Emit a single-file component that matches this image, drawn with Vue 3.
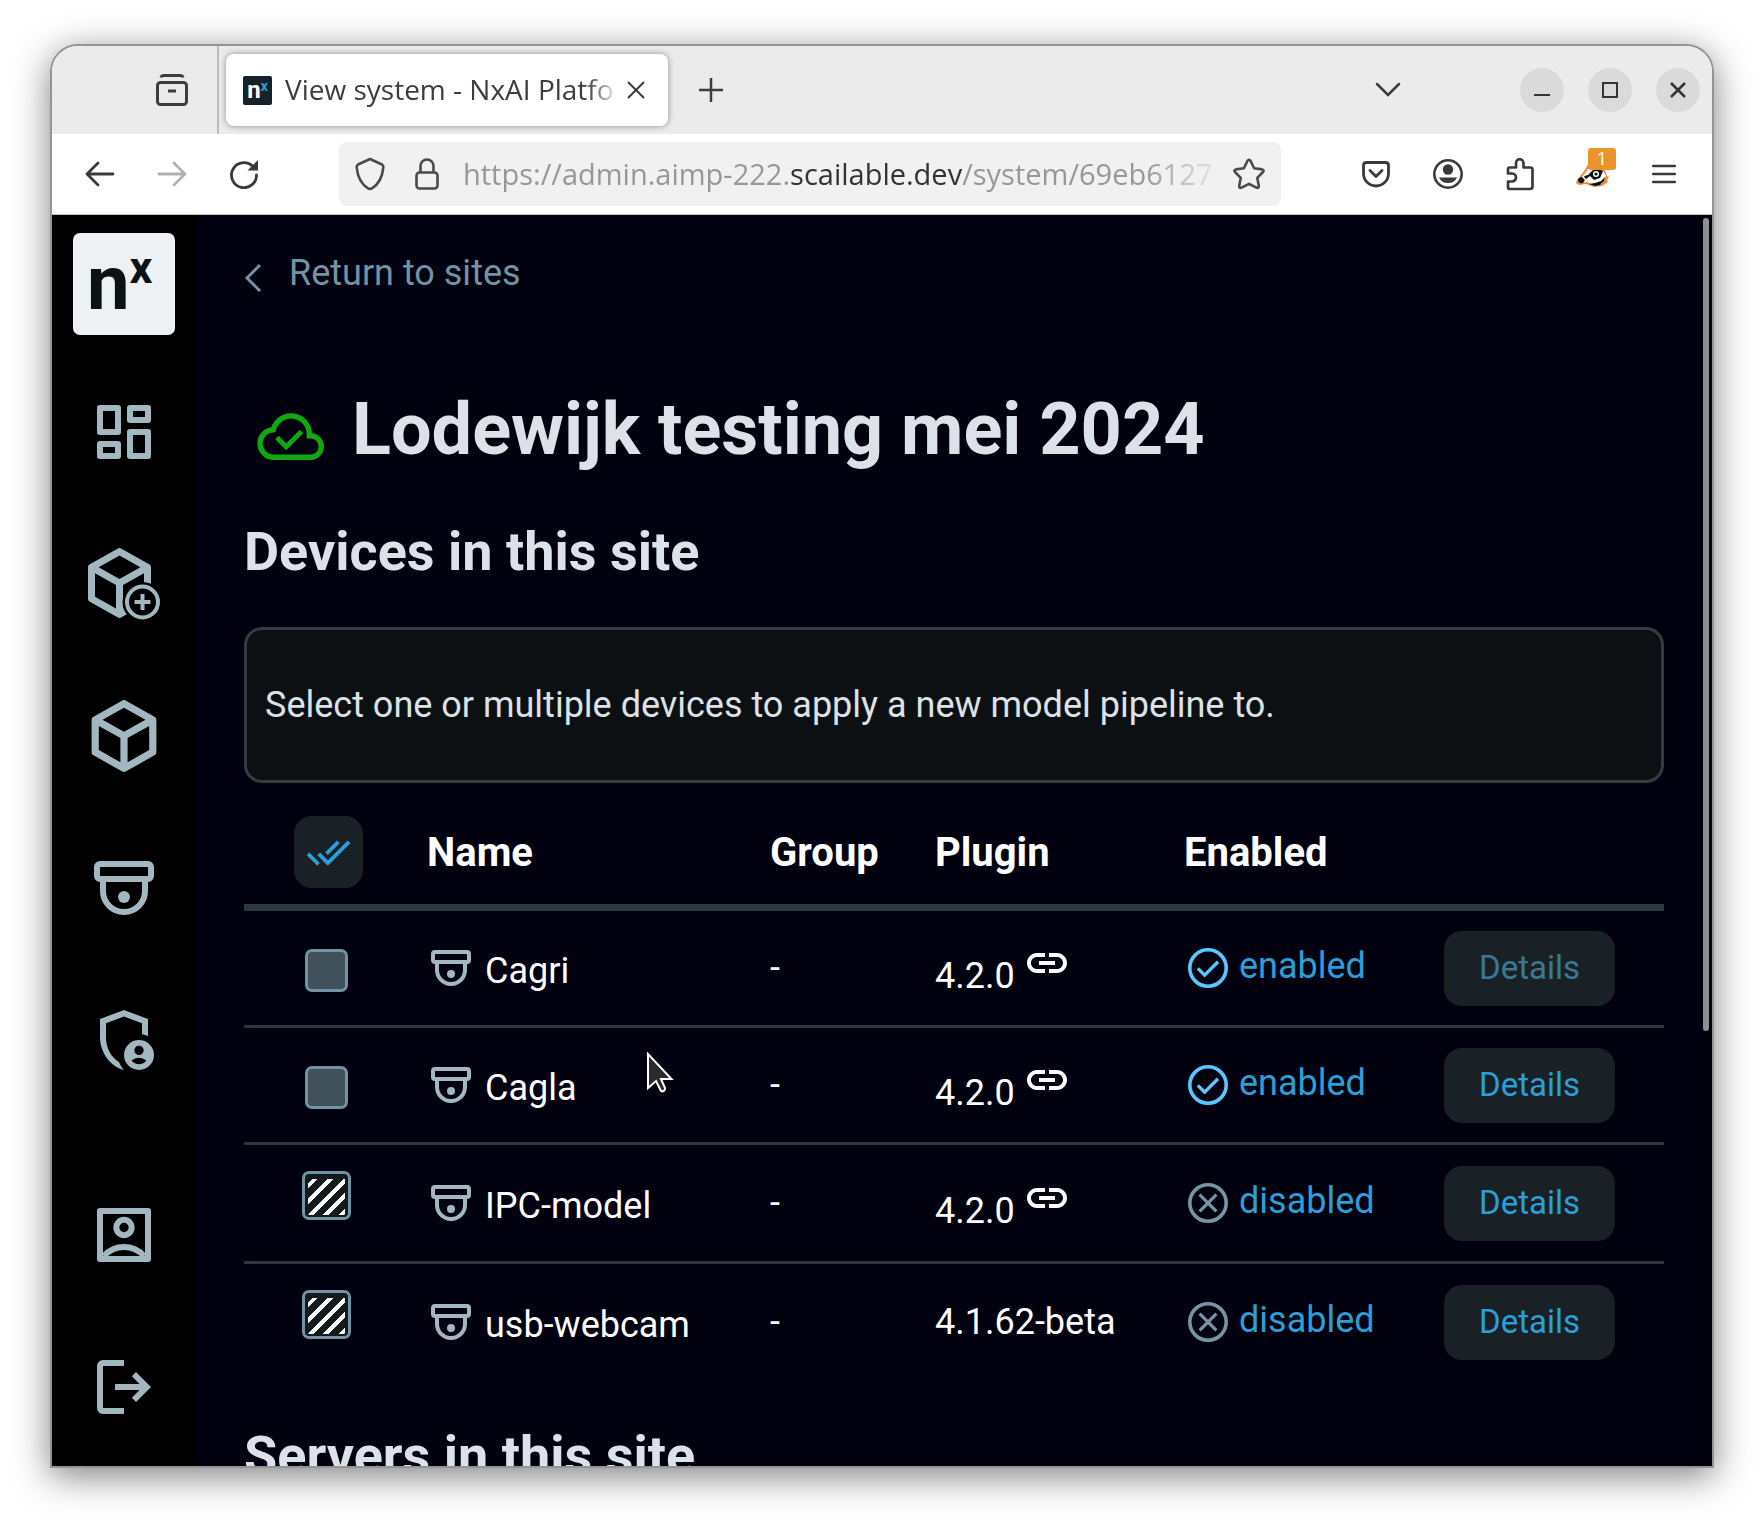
<script setup>
import { ref } from 'vue'

const devices = ref([
  { name: 'Cagri', group: '-', plugin: '4.2.0', linked: true, enabled: true, busy: true },
  { name: 'Cagla', group: '-', plugin: '4.2.0', linked: true, enabled: true, busy: false },
  { name: 'IPC-model', group: '-', plugin: '4.2.0', linked: true, enabled: false, busy: false },
  { name: 'usb-webcam', group: '-', plugin: '4.1.62-beta', linked: false, enabled: false, busy: false },
])
</script>

<template>
  <div class="desktop">
    <div class="window">
      <header class="tabbar">
        <button class="icon-btn recent" aria-label="Recent browsing">
          <svg width="32" height="32" viewBox="0 0 32 32" fill="none" stroke="#3d3d3d" stroke-width="3">
            <path d="M5 3.500Q5.500 1.500 8 1.500H24Q26.500 1.500 27 3.500" />
            <rect x="1.500" y="8.500" width="29" height="22" rx="3" />
            <path d="M12 17h8" />
          </svg>
        </button>
        <div class="tab">
          <span class="favicon"><b>n</b><i>x</i></span>
          <span class="tab-title">View system - NxAI Platfo</span>
          <button class="icon-btn" aria-label="Close tab">
            <svg width="18" height="18" viewBox="0 0 18 18" stroke="#3d3d3d" stroke-width="2"><path d="M1 1l16 16M17 1L1 17" /></svg>
          </button>
        </div>
        <button class="icon-btn new-tab" aria-label="New tab">
          <svg width="24" height="24" viewBox="0 0 24 24" stroke="#3d3d3d" stroke-width="2.500"><path d="M12 0v24M0 12h24" /></svg>
        </button>
        <button class="icon-btn list-tabs" aria-label="List all tabs">
          <svg width="26" height="16" viewBox="0 0 26 16" fill="none" stroke="#3d3d3d" stroke-width="2.500" stroke-linecap="round"><path d="M2 2l11 11L24 2" /></svg>
        </button>
        <div class="controls">
          <button aria-label="Minimize"><svg width="16" height="16" viewBox="0 0 16 16" stroke="#333" stroke-width="2"><path d="M0 13h16" /></svg></button>
          <button aria-label="Maximize"><svg width="16" height="16" viewBox="0 0 16 16" fill="none" stroke="#333" stroke-width="2"><path d="M1 1h14v14H1z" /></svg></button>
          <button aria-label="Close window"><svg width="16" height="16" viewBox="0 0 16 16" stroke="#333" stroke-width="2.500"><path d="M1 1l14 14M15 1L1 15" /></svg></button>
        </div>
      </header>

      <div class="toolbar">
        <div class="nav-buttons">
          <button class="icon-btn" aria-label="Back">
            <svg width="30" height="26" viewBox="0 0 30 26" fill="none" stroke="#3a3a3a" stroke-width="2.800" stroke-linecap="round" stroke-linejoin="round"><path d="M28 13H2M13 2L2 13l11 11" /></svg>
          </button>
          <button class="icon-btn" aria-label="Forward" disabled>
            <svg width="30" height="26" viewBox="0 0 30 26" fill="none" stroke="#b0b0b0" stroke-width="2.800" stroke-linecap="round" stroke-linejoin="round"><path d="M2 13h26M17 2l11 11-11 11" /></svg>
          </button>
          <button class="icon-btn" aria-label="Reload">
            <svg width="30" height="30" viewBox="0 0 30 30"><path d="M23.500 7A12.500 12.500 0 1 0 27.500 16" fill="none" stroke="#3a3a3a" stroke-width="2.800" stroke-linecap="round" /><path d="M29 1v10.500H18.500z" fill="#3a3a3a" /></svg>
          </button>
        </div>
        <div class="urlbar">
          <svg width="30" height="34" viewBox="0 0 30 34" fill="none" stroke="#4a4a4a" stroke-width="2.600" stroke-linejoin="round"><path d="M15 2l12 5.500q1.500 1 1.300 3C27.500 19 24 27 17 31.300q-2 1.200-4 0C6 27 2.500 19 1.700 10.500q-.2-2 1.300-3z" /></svg>
          <svg width="24" height="34" viewBox="0 0 24 34" fill="none" stroke="#4a4a4a" stroke-width="2.600"><rect x="1.500" y="15.500" width="21" height="16" rx="3" /><path d="M5.500 15V9a6.500 6.500 0 0 1 13 0v6" /></svg>
          <div class="url">https://admin.aimp-222.<b>scailable.dev</b>/system/69eb6127</div>
          <svg width="32" height="32" viewBox="0 0 32 32" fill="none" stroke="#4a4a4a" stroke-width="2.600" stroke-linejoin="round"><path d="M14.500 2.800q1.500-2.200 3 0l3.600 7.500 8 1.100q2.400.6.900 2.600l-5.700 5.900 1.500 8q.1 2.600-2.400 1.700L16 25.800l-7.400 3.800q-2.500.9-2.400-1.700l1.500-8L2 14q-1.500-2 .9-2.600l8-1.100z" /></svg>
        </div>
        <div class="extensions">
          <button class="icon-btn" aria-label="Save to Pocket">
            <svg width="28" height="32" viewBox="0 0 28 32" fill="none" stroke="#3a3a3a" stroke-width="2.800" stroke-linecap="round" stroke-linejoin="round"><path d="M4.500 4.500h19q3 0 3 3V15.500a12.500 12.500 0 0 1-25 0V7.500q0-3 3-3zM8 12.500l6 6 6-6" /></svg>
          </button>
          <button class="icon-btn" aria-label="Account">
            <svg width="32" height="32" viewBox="0 0 32 32" fill="#3a3a3a"><circle cx="16" cy="16" r="13.700" fill="none" stroke="#3a3a3a" stroke-width="2.600" /><circle cx="16" cy="11.500" r="5.200" /><path d="M7 19.500h18q-2.500 5.500-9 5.500T7 19.500z" /></svg>
          </button>
          <button class="icon-btn" aria-label="Extensions">
            <svg width="28" height="34" viewBox="0 0 28 34" fill="none" stroke="#3a3a3a" stroke-width="2.700" stroke-linejoin="round"><path d="M3.500 10.500H10V6.500a3.500 4 0 0 1 7.500 0V10.500h7q2 0 2 2V29.500q0 2.500-2.500 2.500H4q-2 0-2-2V24.500H6a3.500 3.500 0 0 0 0-8H2V12.500q0-2 1.500-2z" /></svg>
          </button>
          <button class="icon-btn badger" aria-label="Privacy Badger">
            <svg width="34" height="28" viewBox="0 0 34 28">
              <path d="M1 20C5 15 9 11 12 4l4-2 12 5 3 9 2 1-2 3 1 2-6 4-8 1-8-3-7 1-3-2z" fill="#ec8a35" />
              <path d="M3 20C8 15 11 11 13 7l13 2 4 7-4 8-8 1-7-3-7 1z" fill="#fff" />
              <path d="M2 19q2-2 4-2l3 3-2 3q-5 1-5-4zM8 17C11 13 15 9 22 8l5 3-3 7-6 2-4-4-4 3z" fill="#111" />
              <path d="M12 9l1-5 3-1-1 4zM13 24l6-1 6-2 4-4-1 4-4 4-5 1z" fill="#111" />
              <circle cx="20" cy="14" r="3" fill="#fff" /><circle cx="20" cy="14" r="1.600" fill="#111" />
              <path d="M8 16L17 8l3-1-8 8z" fill="#fff" />
            </svg>
            <span class="count">1</span>
          </button>
          <button class="icon-btn" aria-label="Open application menu">
            <svg width="24" height="20" viewBox="0 0 24 20" stroke="#3a3a3a" stroke-width="2.400" stroke-linecap="round"><path d="M1 2h22M1 10h22M1 18h22" /></svg>
          </button>
        </div>
      </div>

      <div class="page">
        <nav class="sidebar">
          <a href="#" class="logo" aria-label="Nx home"><span class="logo-n">n</span><span class="logo-x">x</span></a>
          <a href="#" aria-label="Dashboard">
            <svg viewBox="0 0 24 24" fill="none" stroke="currentColor" stroke-width="2" stroke-linejoin="round"><path d="M4 4h6v8H4zM14 4h6v4h-6zM14 12h6v8h-6zM4 16h6v4H4z" /></svg>
          </a>
          <a href="#" aria-label="Add model">
            <svg viewBox="0 0 72 72" fill="none">
              <path transform="translate(-10.500 -7) scale(3.500)" fill="currentColor" d="M21,16.500C21,16.880 20.790,17.210 20.470,17.380L12.570,21.820C12.410,21.940 12.210,22 12,22C11.790,22 11.590,21.940 11.430,21.820L3.530,17.380C3.210,17.210 3,16.880 3,16.500V7.500C3,7.120 3.210,6.790 3.530,6.620L11.430,2.180C11.590,2.060 11.790,2 12,2C12.210,2 12.410,2.060 12.570,2.180L20.470,6.620C20.790,6.790 21,7.120 21,7.500V16.500M12,4.150L6.040,7.500L12,10.850L17.960,7.500L12,4.150M5,15.910L11,19.290V12.580L5,9.210V15.910M19,15.910V9.210L13,12.580V19.290L19,15.910Z" />
              <circle cx="54.500" cy="54" r="20" fill="#000" />
              <circle cx="54.500" cy="54" r="15.500" stroke="currentColor" stroke-width="4" />
              <path d="M54.500 46v16M46.500 54h16" stroke="currentColor" stroke-width="4" />
            </svg>
          </a>
          <a href="#" aria-label="Models">
            <svg viewBox="2 2 20 20" fill="currentColor"><path d="M21,16.500C21,16.880 20.790,17.210 20.470,17.380L12.570,21.820C12.410,21.940 12.210,22 12,22C11.790,22 11.590,21.940 11.430,21.820L3.530,17.380C3.210,17.210 3,16.880 3,16.500V7.500C3,7.120 3.210,6.790 3.530,6.620L11.430,2.180C11.590,2.060 11.790,2 12,2C12.210,2 12.410,2.060 12.570,2.180L20.470,6.620C20.790,6.790 21,7.120 21,7.500V16.500M12,4.150L6.040,7.500L12,10.850L17.960,7.500L12,4.150M5,15.910L11,19.290V12.580L5,9.210V15.910M19,15.910V9.210L13,12.580V19.290L19,15.910Z" /></svg>
          </a>
          <a href="#" aria-label="Devices">
            <svg viewBox="0 0 24 24" fill="none" stroke="currentColor" stroke-width="2"><rect x="3" y="4" width="18" height="5" rx="1" /><path d="M5 9v4a7 7 0 0 0 14 0V9" /><circle cx="12" cy="15" r="2" fill="currentColor" stroke="none" /></svg>
          </a>
          <a href="#" aria-label="Administration">
            <svg viewBox="0 0 24 24" fill="currentColor" fill-rule="evenodd"><path d="M12 2L4 5v6.090C4 16.140 7.410 20.850 12 22C11.300 21.200 10.700 20.200 10.300 19.300C7.700 17.800 6 14.600 6 11.090V6.390L12 4.140L18 6.390V10.100C18.700 10.200 19.400 10.400 20 10.700V5zM17 12a5 5 0 1 0 0 10 5 5 0 0 0 0-10zM17 13.900a1.550 1.550 0 1 1 0 3.100 1.550 1.550 0 0 1 0-3.100zM14.550 18.800q1-.9 2.450-.9t2.450.9q-1 1.250-2.450 1.250t-2.450-1.250z" /></svg>
          </a>
          <a href="#" class="account" aria-label="Account">
            <svg viewBox="0 0 24 24" fill="none" stroke="currentColor" stroke-width="2" stroke-linejoin="round"><path d="M4 4h16v16H4z" /><circle cx="12" cy="9.500" r="2.550" /><path d="M5.300 19C9 15 15 15 18.700 19" /></svg>
          </a>
          <a href="#" aria-label="Log out">
            <svg viewBox="0 -960 960 960" fill="currentColor"><path d="M200-120q-33 0-56.500-23.500T120-200v-560q0-33 23.500-56.500T200-840h280v80H200v560h280v80H200Zm440-160-55-58 102-102H360v-80h327L585-622l55-58 200 200-200 200Z" /></svg>
          </a>
        </nav>

        <main>
          <a href="#" class="back">
            <svg width="18" height="32" viewBox="0 0 18 32" fill="none" stroke="currentColor" stroke-width="3"><path d="M16 3L3 16l13 13" /></svg>
            Return to sites
          </a>
          <div class="title">
            <svg width="72" height="72" viewBox="0 0 24 24" fill="none" stroke="#10a810"><path stroke-width="1.800" d="M6.500 19.100A4.600 4.600 0 0 1 6.100 9.900A6.100 6.100 0 0 1 18.100 11V11.900H18.500A3.600 3.600 0 0 1 18.500 19.100Z" /><path stroke-width="1.600" d="M7.300 12.500l3.100 3.100L15.500 10.500" /></svg>
            <h1>Lodewijk testing mei 2024</h1>
          </div>
          <h2>Devices in this site</h2>
          <p class="notice">Select one or multiple devices to apply a new model pipeline to.</p>

          <table>
            <colgroup>
              <col class="c-select"><col><col class="c-group"><col class="c-plugin"><col class="c-enabled"><col class="c-action">
            </colgroup>
            <thead>
              <tr>
                <th class="select">
                  <button class="select-all" aria-label="Select all">
                    <svg width="45" height="45" viewBox="0 0 24 24" fill="currentColor"><path d="M18 7l-1.410-1.410-6.340 6.340 1.410 1.410L18 7zm4.240-1.410L11.660 16.170 7.480 12l-1.410 1.410L11.660 19l12-12-1.420-1.410zM.41 13.410L6 19l1.410-1.410L1.830 12 .41 13.410z" /></svg>
                  </button>
                </th>
                <th class="name">Name</th>
                <th>Group</th>
                <th>Plugin</th>
                <th>Enabled</th>
                <th></th>
              </tr>
            </thead>
            <tbody>
              <tr v-for="d in devices" :key="d.name" :class="{ off: !d.enabled }">
                <td class="select"><input type="checkbox" :aria-label="'Select ' + d.name" :disabled="!d.enabled"></td>
                <td class="name">
                  <div class="cell device">
                    <svg width="48" height="48" viewBox="0 0 24 24" fill="none" stroke="#a3b7c1" stroke-width="2"><rect x="3" y="4" width="18" height="5" rx="1" /><path d="M5 9v4a7 7 0 0 0 14 0V9" /><circle cx="12" cy="15" r="2" fill="#a3b7c1" stroke="none" /></svg>
                    <span>{{ d.name }}</span>
                  </div>
                </td>
                <td>{{ d.group }}</td>
                <td>
                  <div v-if="d.linked" class="cell linked">
                    <span>{{ d.plugin }}</span>
                    <svg width="48" height="48" viewBox="0 0 24 24" fill="#fff"><path d="M4 12c0-1.660 1.340-3 3-3h4V7H7c-2.760 0-5 2.240-5 5s2.240 5 5 5h4v-2H7c-1.660 0-3-1.340-3-3zM8 13h8v-2H8v2zm9-6h-4v2h4c1.660 0 3 1.340 3 3s-1.340 3-3 3h-4v2h4c2.760 0 5-2.240 5-5s-2.240-5-5-5z" /></svg>
                  </div>
                  <template v-else>{{ d.plugin }}</template>
                </td>
                <td>
                  <a href="#" class="cell status">
                    <svg v-if="d.enabled" width="48" height="48" viewBox="0 0 24 24" fill="none" stroke="#5cc6ff"><circle cx="12" cy="12" r="9.100" stroke-width="1.800" /><path stroke-width="1.700" d="M6.900 12.200l3.400 3.400L17 8.900" /></svg>
                    <svg v-else width="48" height="48" viewBox="0 0 24 24" fill="none" stroke="#7694a4"><circle cx="12" cy="12" r="9.100" stroke-width="1.800" /><path stroke-width="1.600" d="M7.800 7.800l8.400 8.400M16.200 7.800l-8.400 8.400" /></svg>
                    <span>{{ d.enabled ? 'enabled' : 'disabled' }}</span>
                  </a>
                </td>
                <td><button class="details" :disabled="d.busy">Details</button></td>
              </tr>
            </tbody>
          </table>

          <h2 class="servers">Servers in this site</h2>
        </main>
        <div class="scroll-thumb"></div>
        <svg class="cursor" width="28" height="42" viewBox="0 0 28 42"><path d="M2 2v34l8-7 4.500 9q1 2 3 1t1.500-3L15 27h10.500z" fill="#2b2b2b" stroke="#fff" stroke-width="2" /></svg>
      </div>
    </div>
  </div>
</template>

<style>
body {
  margin: 0;
  background: #fff;
}
</style>

<style scoped>
* {
  box-sizing: border-box;
}
button {
  border: 0;
  padding: 0;
  font: inherit;
}
svg {
  display: block;
  flex: none;
}
a {
  text-decoration: none;
}
.desktop {
  height: 100vh;
  padding: 44px 50px 56px;
  display: flex;
}
.window {
  flex: 1;
  min-width: 0;
  display: flex;
  flex-direction: column;
  border: 2px solid #949494;
  border-radius: 28px 28px 0 0;
  overflow: hidden;
  background: #fff;
  box-shadow: 0 8px 36px rgba(0, 0, 0, 0.5);
}

/* Browser chrome */
.icon-btn {
  background: none;
  display: flex;
  align-items: center;
  justify-content: center;
}
.tabbar {
  flex: none;
  height: 88px;
  background: #ebebeb;
  display: flex;
  align-items: center;
  font-family: "Open Sans", "Noto Sans", sans-serif;
}
.recent {
  align-self: stretch;
  width: 167px;
  padding-left: 74px;
  border-right: 2px solid #bbb;
}
.tab {
  width: 442px;
  height: 72px;
  margin-left: 7px;
  padding: 0 23px 0 17px;
  display: flex;
  align-items: center;
  background: #fff;
  border-radius: 8px;
  box-shadow: 0 0 6px rgba(0, 0, 0, 0.4);
}
.favicon {
  flex: none;
  width: 29px;
  height: 29px;
  border-radius: 2px;
  background: #17212a;
  color: #fff;
  display: flex;
  justify-content: center;
  font-family: Roboto, sans-serif;
  font-size: 24px;
  line-height: 28px;
}
.favicon i {
  font-style: normal;
  font-weight: 700;
  font-size: 14px;
  line-height: 20px;
  color: #2a9fd8;
}
.tab-title {
  flex: 1;
  min-width: 0;
  margin-left: 13px;
  padding-bottom: 2px;
  font-size: 28px;
  color: #3d3d3d;
  white-space: nowrap;
  overflow: hidden;
  mask-image: linear-gradient(to right, #000 calc(100% - 32px), transparent);
}
.tab .icon-btn {
  margin-left: 8px;
}
.new-tab {
  margin-left: 31px;
}
.list-tabs {
  margin-left: auto;
}
.controls {
  display: flex;
  gap: 24px;
  margin: 0 12px 0 119px;
}
.controls button {
  width: 44px;
  height: 44px;
  border-radius: 50%;
  background: #dadada;
  display: flex;
  align-items: center;
  justify-content: center;
}
.toolbar {
  flex: none;
  height: 81px;
  border-bottom: 1px solid #c4c4c8;
  display: flex;
  align-items: center;
  font-family: "Open Sans", "Noto Sans", sans-serif;
}
.nav-buttons {
  display: flex;
  align-items: center;
  gap: 42px;
  padding: 0 80px 0 33px;
}
.urlbar {
  flex: 1;
  min-width: 0;
  height: 64px;
  padding: 0 16px;
  display: flex;
  align-items: center;
  border-radius: 8px;
  background: #f1f1f1;
}
.urlbar svg + svg {
  margin-left: 30px;
}
.url {
  flex: 1;
  min-width: 0;
  margin: 0 8px 0 24px;
  padding-bottom: 2px;
  font-size: 29px;
  color: #979797;
  white-space: nowrap;
  overflow: hidden;
  mask-image: linear-gradient(to right, #000 calc(100% - 80px), transparent);
}
.url b {
  font-weight: 400;
  color: #333;
}
.extensions {
  display: flex;
  align-items: center;
  gap: 42px;
  padding: 0 36px 0 81px;
}
.badger {
  position: relative;
}
.count {
  position: absolute;
  left: 12px;
  top: -12px;
  width: 28px;
  height: 22px;
  border-radius: 3px;
  background: #ec942b;
  color: #fff;
  font-size: 18px;
  line-height: 20px;
  text-align: center;
}

/* Page */
.page {
  position: relative;
  flex: 1;
  min-height: 0;
  display: flex;
  overflow: hidden;
  background: #01010f;
  color: #fff;
  font-family: Roboto, sans-serif;
  font-size: 36px;
  line-height: 42px;
}
.sidebar {
  flex: none;
  width: 144px;
  padding-top: 18px;
  display: flex;
  flex-direction: column;
  align-items: center;
  gap: 80px;
  background: #000;
}
.sidebar a {
  color: #a3b7c1;
}
.sidebar svg {
  width: 72px;
  height: 72px;
}
.sidebar .logo {
  width: 102px;
  height: 102px;
  margin-bottom: -19px;
  padding-left: 14px;
  display: flex;
  border-radius: 7px;
  background: #edf1f4;
  color: #0c1113;
  font-weight: 700;
}
.logo-n {
  font-size: 76px;
  line-height: 100px;
}
.logo-x {
  font-size: 45px;
  line-height: 69px;
}
.account {
  margin-top: 43px;
}
main {
  flex: 1;
  min-width: 0;
  padding: 37px 48px 0;
}
.back {
  display: flex;
  align-items: flex-end;
  gap: 27px;
  color: #7393a5;
}
.title {
  display: flex;
  align-items: flex-end;
  gap: 25px;
  margin-top: 94px;
  padding-left: 11px;
}
h1 {
  margin: 0;
  font-size: 72px;
  line-height: 84px;
  font-weight: 700;
  color: #dce2e7;
}
h2 {
  margin: 48px 0 43px;
  font-size: 54px;
  line-height: 64px;
  font-weight: 700;
  color: #dce2e7;
}
.notice {
  margin: 0 0 33px;
  padding: 54px 18px;
  border: 3px solid #333c41;
  border-radius: 18px;
  background: #0c1012;
  color: #dce2e7;
}
table {
  width: 100%;
  table-layout: fixed;
  border-collapse: separate;
  border-spacing: 0;
}
.c-select {
  width: 168px;
}
.c-group {
  width: 165px;
}
.c-plugin {
  width: 249px;
}
.c-enabled {
  width: 260px;
}
.c-action {
  width: 220px;
}
th {
  height: 95px;
  padding: 2px 0 16px;
  border-bottom: 7px solid #2c373e;
  font-size: 40px;
  font-weight: 700;
  text-align: left;
}
th.select {
  padding-top: 0;
}
.select-all {
  width: 69px;
  height: 72px;
  border-radius: 18px;
  background: #1a2126;
  color: #2a9fd8;
  display: inline-flex;
  align-items: center;
  justify-content: center;
  vertical-align: top;
}
td {
  height: 117px;
  padding: 0;
  border-bottom: 3px solid #2c373e;
}
.off td {
  height: 119px;
}
tr:last-child td {
  border-bottom-color: transparent;
}
.select {
  text-align: center;
}
.name {
  padding-left: 15px;
}
input {
  appearance: none;
  display: inline-block;
  vertical-align: top;
  width: 43px;
  height: 43px;
  margin: 5px 4px 0 0;
  border: 3px solid #7393a5;
  border-radius: 7px;
  background: #40515c;
}
input:disabled {
  width: 49px;
  height: 49px;
  margin: 0 4px 16px 0;
  padding: 5px 3px 2px;
  background:
    repeating-linear-gradient(135deg, transparent 0 3px, #fff 3px 7px, transparent 7px 11px) content-box,
    #14191c;
}
.cell {
  display: flex;
  align-items: center;
}
.device {
  gap: 10px;
}
.device span {
  padding-top: 5px;
}
.linked {
  gap: 8px;
  align-items: flex-start;
}
.linked span {
  padding-top: 16px;
}
.status {
  gap: 7px;
  color: #2a9fd8;
}
.status span {
  padding-bottom: 5px;
}
.details {
  display: block;
  width: 171px;
  height: 75px;
  border-radius: 18px;
  background: #1a2126;
  color: #2a9fd8;
  font-size: 33px;
}
.details:disabled {
  color: #397896;
}
.servers {
  margin-top: 41px;
}
.scroll-thumb {
  position: absolute;
  right: 3px;
  top: 3px;
  width: 6px;
  height: 65%;
  border-radius: 3px;
  background: #8f8f8f;
}
.cursor {
  position: absolute;
  left: 594px;
  top: 837px;
}
</style>
